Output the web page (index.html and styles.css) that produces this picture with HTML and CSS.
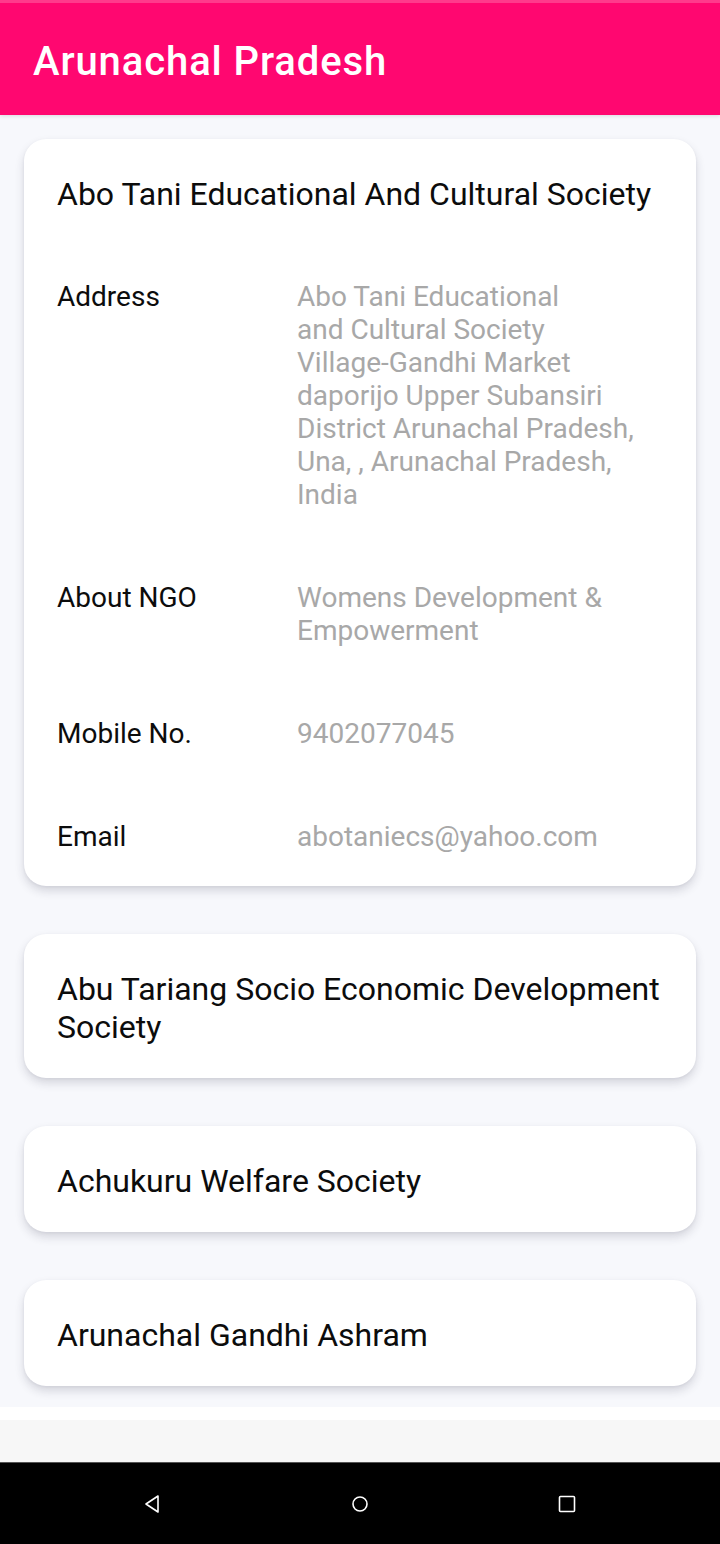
FILE: index.html
```html
<!DOCTYPE html>
<html lang="en">
<head>
<meta charset="utf-8">
<title>Arunachal Pradesh</title>
<link rel="stylesheet" href="styles.css">
</head>
<body>
<div class="screen">
  <header class="appbar">
    <h1 class="appbar-title">Arunachal Pradesh</h1>
  </header>
  <main class="list">
    <section class="card">
      <h2 class="card-title">Abo Tani Educational And Cultural Society</h2>
      <div class="details">
        <div class="row">
          <div class="label">Address</div>
          <div class="value">Abo Tani Educational<br>and Cultural Society<br>Village-Gandhi Market<br>daporijo Upper Subansiri<br>District Arunachal Pradesh,<br>Una, , Arunachal Pradesh,<br>India</div>
        </div>
        <div class="row">
          <div class="label">About NGO</div>
          <div class="value">Womens Development &amp;<br>Empowerment</div>
        </div>
        <div class="row">
          <div class="label">Mobile No.</div>
          <div class="value">9402077045</div>
        </div>
        <div class="row">
          <div class="label">Email</div>
          <div class="value">abotaniecs@yahoo.com</div>
        </div>
      </div>
    </section>
    <section class="card">
      <h2 class="card-title">Abu Tariang Socio Economic Development Society</h2>
    </section>
    <section class="card">
      <h2 class="card-title">Achukuru Welfare Society</h2>
    </section>
    <section class="card">
      <h2 class="card-title">Arunachal Gandhi Ashram</h2>
    </section>
  </main>
  <div class="spacer-white"></div>
  <div class="bottom-area"></div>
  <nav class="navbar">
    <svg class="nav-icon" width="20" height="20" viewBox="0 0 20 20"><path d="M15 2 L3 10 L15 18 Z" fill="none" stroke="#fff" stroke-width="1.6" stroke-linejoin="round"/></svg>
    <svg class="nav-icon" width="20" height="20" viewBox="0 0 20 20"><circle cx="10" cy="10" r="7" fill="none" stroke="#fff" stroke-width="1.6"/></svg>
    <svg class="nav-icon" width="20" height="20" viewBox="0 0 20 20"><rect x="2.5" y="2.5" width="15" height="15" rx="1" fill="none" stroke="#fff" stroke-width="1.6"/></svg>
  </nav>
</div>
</body>
</html>
```

FILE: styles.css
```css
* { box-sizing: border-box; }
html, body { margin: 0; padding: 0; }
body {
  width: 720px;
  height: 1544px;
  font-family: Roboto, "Liberation Sans", sans-serif;
  background: #ffffff;
  overflow: hidden;
}
.screen {
  display: flex;
  flex-direction: column;
  height: 1544px;
}
.appbar {
  height: 115px;
  background: #ff0770;
  border-top: 3px solid #ff3a8c;
  display: flex;
  align-items: center;
  padding: 0 33px;
  flex-shrink: 0;
  position: relative;
  z-index: 2;
  box-shadow: 0 1px 4px rgba(0,0,0,0.12);
}
.appbar-title {
  margin: 0;
  color: #ffffff;
  font-size: 40px;
  font-weight: 500;
  letter-spacing: 0.9px;
  padding-top: 5px;
}
.list {
  height: 1292px;
  flex-shrink: 0;
  overflow: hidden;
  background: #f7f8fc;
  display: flex;
  flex-direction: column;
  gap: 48px;
  padding: 24px;
}
.card {
  flex-shrink: 0;
  background: #ffffff;
  border-radius: 22px;
  padding: 36px 33px 32px;
  box-shadow: 0 5px 10px rgba(40, 40, 60, 0.16), 0 1px 3px rgba(40,40,60,0.06);
}
.card-title {
  margin: 0;
  font-size: 32px;
  font-weight: 400;
  line-height: 38px;
  color: #0c0c0c;
}
.details {
  display: flex;
  flex-direction: column;
  gap: 70px;
  margin-top: 67px;
  margin-bottom: 1px;
}
.row {
  display: flex;
}
.label {
  width: 240px;
  flex-shrink: 0;
  font-size: 28px;
  line-height: 33px;
  color: #0c0c0c;
}
.value {
  flex: 1;
  font-size: 28px;
  line-height: 33px;
  color: #a8a8a8;
}
.spacer-white {
  height: 13px;
  background: #ffffff;
  flex-shrink: 0;
}
.bottom-area {
  height: 42px;
  background: #f7f7f7;
  flex-shrink: 0;
}
.navbar {
  flex: 1;
  background: #000000;
  border-top: 1px solid #555;
  display: flex;
  align-items: center;
  justify-content: space-between;
  padding: 0 143px 0 143px;
}
.nav-icon { display: block; }
```
